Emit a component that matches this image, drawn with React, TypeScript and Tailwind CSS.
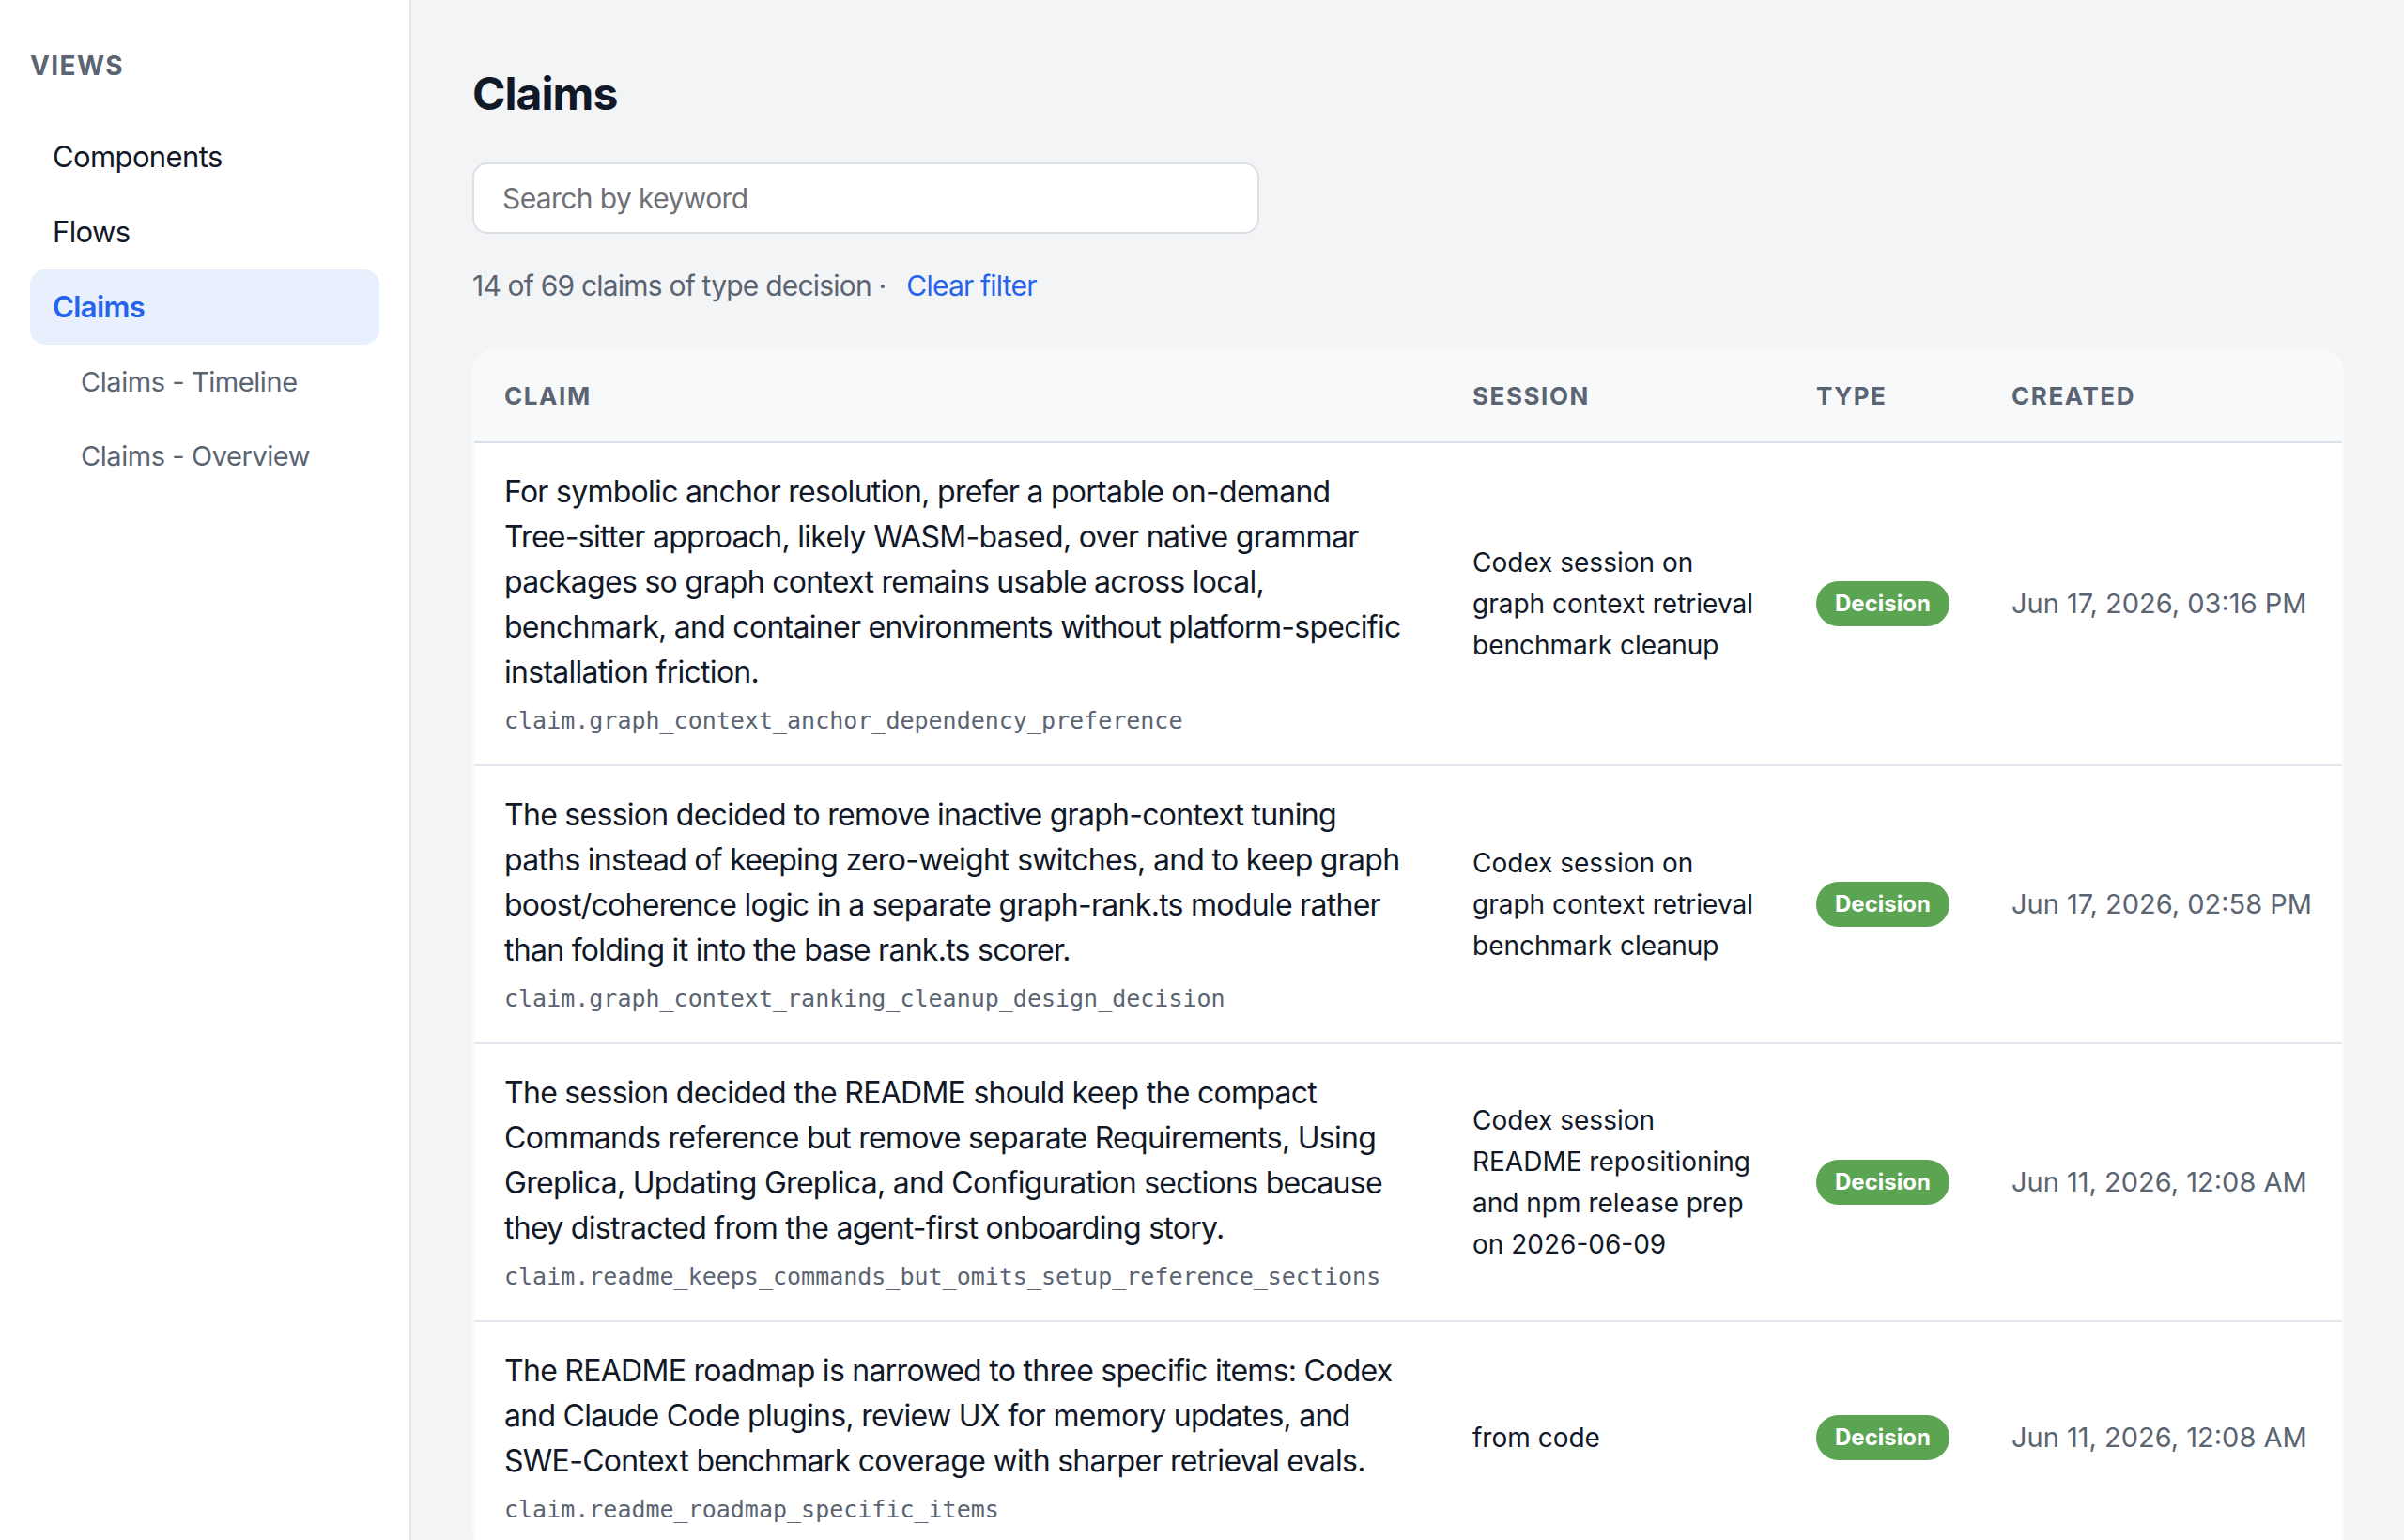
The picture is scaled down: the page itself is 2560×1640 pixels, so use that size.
import React from 'react';

type Claim = {
  text: string;
  id: string;
  session: string;
  created: string;
};

const claims: Claim[] = [
  {
    text: 'For symbolic anchor resolution, prefer a portable on-demand Tree-sitter approach, likely WASM-based, over native grammar packages so graph context remains usable across local, benchmark, and container environments without platform-specific installation friction.',
    id: 'claim.graph_context_anchor_dependency_preference',
    session: 'Codex session on graph context retrieval benchmark cleanup',
    created: 'Jun 17, 2026, 03:16 PM',
  },
  {
    text: 'The session decided to remove inactive graph-context tuning paths instead of keeping zero-weight switches, and to keep graph boost/coherence logic in a separate graph-rank.ts module rather than folding it into the base rank.ts scorer.',
    id: 'claim.graph_context_ranking_cleanup_design_decision',
    session: 'Codex session on graph context retrieval benchmark cleanup',
    created: 'Jun 17, 2026, 02:58 PM',
  },
  {
    text: 'The session decided the README should keep the compact Commands reference but remove separate Requirements, Using Greplica, Updating Greplica, and Configuration sections because they distracted from the agent-first onboarding story.',
    id: 'claim.readme_keeps_commands_but_omits_setup_reference_sections',
    session: 'Codex session README repositioning and npm release prep on 2026-06-09',
    created: 'Jun 11, 2026, 12:08 AM',
  },
  {
    text: 'The README roadmap is narrowed to three specific items: Codex and Claude Code plugins, review UX for memory updates, and SWE-Context benchmark coverage with sharper retrieval evals.',
    id: 'claim.readme_roadmap_specific_items',
    session: 'from code',
    created: 'Jun 11, 2026, 12:08 AM',
  },
];

const Sidebar: React.FC = () => (
  <aside className="w-[438px] shrink-0 bg-white border-r-2 border-[#e4e6eb] px-8 pt-[50px]">
    <div className="text-[28px] leading-[40px] font-bold tracking-[0.05em] text-[#5b6472]">VIEWS</div>
    <nav className="mt-[37px] flex flex-col">
      <a className="h-[80px] flex items-center px-6 rounded-2xl text-[31px] tracking-[-0.02em] text-[#111827]">Components</a>
      <a className="h-[80px] flex items-center px-6 rounded-2xl text-[31px] tracking-[-0.02em] text-[#111827]">Flows</a>
      <a className="h-[80px] flex items-center px-6 rounded-2xl text-[31px] tracking-[-0.02em] font-semibold text-[#2563eb] bg-[#e8effd]">Claims</a>
      <a className="h-[80px] flex items-center pl-[54px] rounded-2xl text-[29px] tracking-[-0.015em] text-[#5b6472]">Claims - Timeline</a>
      <a className="h-[78px] flex items-center pl-[54px] rounded-2xl text-[29px] tracking-[-0.015em] text-[#5b6472]">Claims - Overview</a>
    </nav>
  </aside>
);

const Badge: React.FC<{ label: string }> = ({ label }) => (
  <span className="inline-flex items-center h-[48px] px-5 rounded-full bg-[#5aa452] text-white text-[24px] font-bold">
    {label}
  </span>
);

export default function App() {
  return (
    <div className="h-screen flex overflow-hidden bg-[#f3f4f6] text-[#111827]" style={{ fontFamily: 'Inter, "Noto Sans", sans-serif' }}>
      <Sidebar />
      <main className="flex-1 overflow-y-auto pl-[65px] pr-16 pt-[70px]">
        <h1 className="text-[48px] leading-[60px] font-bold tracking-[-0.02em] text-[#111827]">Claims</h1>
        <input
          type="text"
          placeholder="Search by keyword"
          className="mt-[43px] block w-[838px] h-[76px] px-[30px] rounded-2xl border-2 border-[#dcdfe5] bg-white text-[30px] tracking-[-0.6px] text-[#111827] placeholder-[#6f7177] outline-none"
        />
        <div className="mt-[33px] text-[30px] leading-[44px] tracking-[-0.8px] text-[#5b6472]">
          14 of 69 claims of type decision ·
          <button className="ml-[22px] tracking-[-0.8px] text-[#2563eb]">Clear filter</button>
        </div>

        <div className="mt-[46px] rounded-3xl border-2 border-[#f8f9fb] bg-white overflow-hidden">
          <table className="w-full table-fixed border-collapse">
            <colgroup>
              <col className="w-[1031px]" />
              <col className="w-[366px]" />
              <col className="w-[208px]" />
              <col />
            </colgroup>
            <thead>
              <tr className="bg-[#f8f9fb] border-b-2 border-[#dadee6]">
                {['CLAIM', 'SESSION', 'TYPE', 'CREATED'].map((h) => (
                  <th key={h} className="px-8 py-[28px] text-left text-[26px] leading-[40px] font-bold tracking-[0.06em] text-[#5b6472]">
                    {h}
                  </th>
                ))}
              </tr>
            </thead>
            <tbody>
              {claims.map((c) => (
                <tr key={c.id} className="border-b-2 border-[#e2e5eb] align-middle">
                  <td className="pl-8 pr-10 py-[28px]">
                    <p className="text-[32px] leading-[48px] tracking-[-0.72px] text-[#111827]">{c.text}</p>
                    <p className="mt-[10px] text-[25px] leading-[36px] text-[#5b6472]" style={{ fontFamily: '"DejaVu Sans Mono", monospace' }}>
                      {c.id}
                    </p>
                  </td>
                  <td className="px-8 py-[28px] text-[28px] leading-[44px] text-[#111827]">{c.session}</td>
                  <td className="px-8 py-[28px]">
                    <Badge label="Decision" />
                  </td>
                  <td className="px-8 py-[28px] text-[29px] leading-[44px] text-[#5b6472] whitespace-nowrap">{c.created}</td>
                </tr>
              ))}
            </tbody>
          </table>
        </div>
      </main>
    </div>
  );
}
